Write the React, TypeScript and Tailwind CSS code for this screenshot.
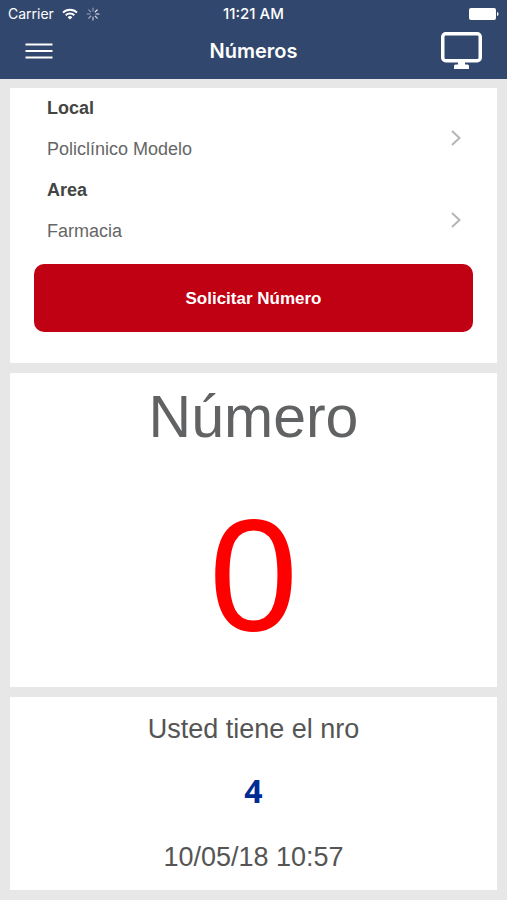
import React from 'react';

const selections = [
  { label: 'Local', value: 'Policlínico Modelo' },
  { label: 'Area', value: 'Farmacia' },
];

const WifiIcon = () => (
  <svg viewBox="0 0 16 12" className="h-3 w-4" fill="none" stroke="#fff" strokeWidth="2" aria-hidden="true">
    <path d="M1 4.6a10 10 0 0 1 14 0" />
    <path d="M3.7 7.3a6.2 6.2 0 0 1 8.6 0" />
    <path d="M8 11.6 5.6 9.2a3.5 3.5 0 0 1 4.8 0z" fill="#fff" stroke="none" />
  </svg>
);

const SpinnerIcon = () => (
  <svg viewBox="0 0 14 14" className="h-3.5 w-3.5" stroke="#fff" strokeWidth="1.2" strokeLinecap="round" aria-hidden="true">
    <path d="M7 1v3" opacity=".45" />
    <path d="m11.2 2.8-2 2" opacity=".95" />
    <path d="M13 7h-3" opacity=".9" />
    <path d="m11.2 11.2-2-2" opacity=".8" />
    <path d="M7 13v-3" opacity=".7" />
    <path d="m2.8 11.2 2-2" opacity=".6" />
    <path d="M1 7h3" opacity=".5" />
    <path d="m2.8 2.8 2 2" opacity=".45" />
  </svg>
);

const BatteryIcon = () => (
  <svg viewBox="0 0 30 12" className="h-3 w-[30px]" fill="#fff" aria-hidden="true">
    <rect width="27" height="12" rx="2" />
    <path d="M28 4c2 .5 2 3.5 0 4z" />
  </svg>
);

const MonitorIcon = () => (
  <svg viewBox="0 0 41 38" className="h-[38px] w-[41px]" aria-hidden="true">
    <rect x="1.75" y="1.75" width="37.5" height="27" rx="3" fill="none" stroke="#fff" strokeWidth="3.5" />
    <path d="M17 29h7v3.500h2.500q1.500 0 1.500 1.500v3H13v-3q0-1.500 1.500-1.500H17z" fill="#fff" />
  </svg>
);

const StatusBar = () => (
  <div className="grid h-7 grid-cols-3 items-center pl-2 pr-2 text-sm leading-5">
    <div className="flex items-center gap-2">
      <span>Carrier</span>
      <WifiIcon />
      <SpinnerIcon />
    </div>
    <span className="text-center text-[15px] font-medium">11:21 AM</span>
    <div className="flex justify-end">
      <BatteryIcon />
    </div>
  </div>
);

const Header = () => (
  <header className="bg-[#32476d] pb-[5px] font-[Inter,sans-serif] text-white">
    <StatusBar />
    <div className="grid h-[46px] grid-cols-3 items-center px-[25px]">
      <button type="button" aria-label="Menú" className="w-7">
        <svg viewBox="0 0 28 16" className="h-4 w-7" stroke="#fff" strokeWidth="2" aria-hidden="true">
          <path d="M.5 1.5h27M.5 8h27M.5 14.5h27" />
        </svg>
      </button>
      <h1 className="text-center text-xl font-semibold">Números</h1>
      <button type="button" aria-label="Pantalla" className="justify-self-end">
        <MonitorIcon />
      </button>
    </div>
  </header>
);

const SelectionRow = ({ label, value }: { label: string; value: string }) => (
  <button type="button" className="flex w-full items-center justify-between pl-[37px] pr-9 text-left text-lg leading-5">
    <span className="flex flex-col gap-[21px] pb-5 pt-px">
      <span className="font-bold text-[#444]">{label}</span>
      <span className="text-[#666]">{value}</span>
    </span>
    <svg viewBox="0 0 10 16" className="h-4 w-2.5" fill="none" stroke="#b5b5b5" strokeWidth="2" aria-hidden="true">
      <path d="m1 1 7.5 7L1 15" />
    </svg>
  </button>
);

const App = () => (
  <div className="min-h-screen bg-[#e7e7e7] font-['Liberation_Sans',Arial,sans-serif]">
    <Header />
    <main className="flex flex-col gap-2.5 px-2.5 pb-2.5 pt-[9px]">
      {/* Place and area */}
      <section className="bg-white pb-[31px] pt-[9px]">
        {selections.map((item) => (
          <SelectionRow key={item.label} label={item.label} value={item.value} />
        ))}
        <div className="px-6 pt-[3px]">
          <button type="button" className="h-[68px] w-full rounded-[10px] bg-[#c00013] pt-0.5 text-[17px] font-bold text-white">
            Solicitar Número
          </button>
        </div>
      </section>

      {/* Number being served */}
      <section className="bg-white pb-8 pt-3 text-center">
        <h2 className="text-[59px] leading-[64px] text-[#606264]">Número</h2>
        <p className="pt-[46px] text-[160px] leading-[160px] text-[#ff0000]">0</p>
      </section>

      {/* Own ticket */}
      <section className="flex flex-col gap-8 bg-white pb-[17px] pt-4 text-center text-[27px] leading-8 text-[#555]">
        <p>Usted tiene el nro</p>
        <p className="pb-1 font-['Open_Sans',sans-serif] text-[32px] font-bold leading-7 text-[#002b92]">4</p>
        <p>10/05/18 10:57</p>
      </section>
    </main>
  </div>
);

export default App;
